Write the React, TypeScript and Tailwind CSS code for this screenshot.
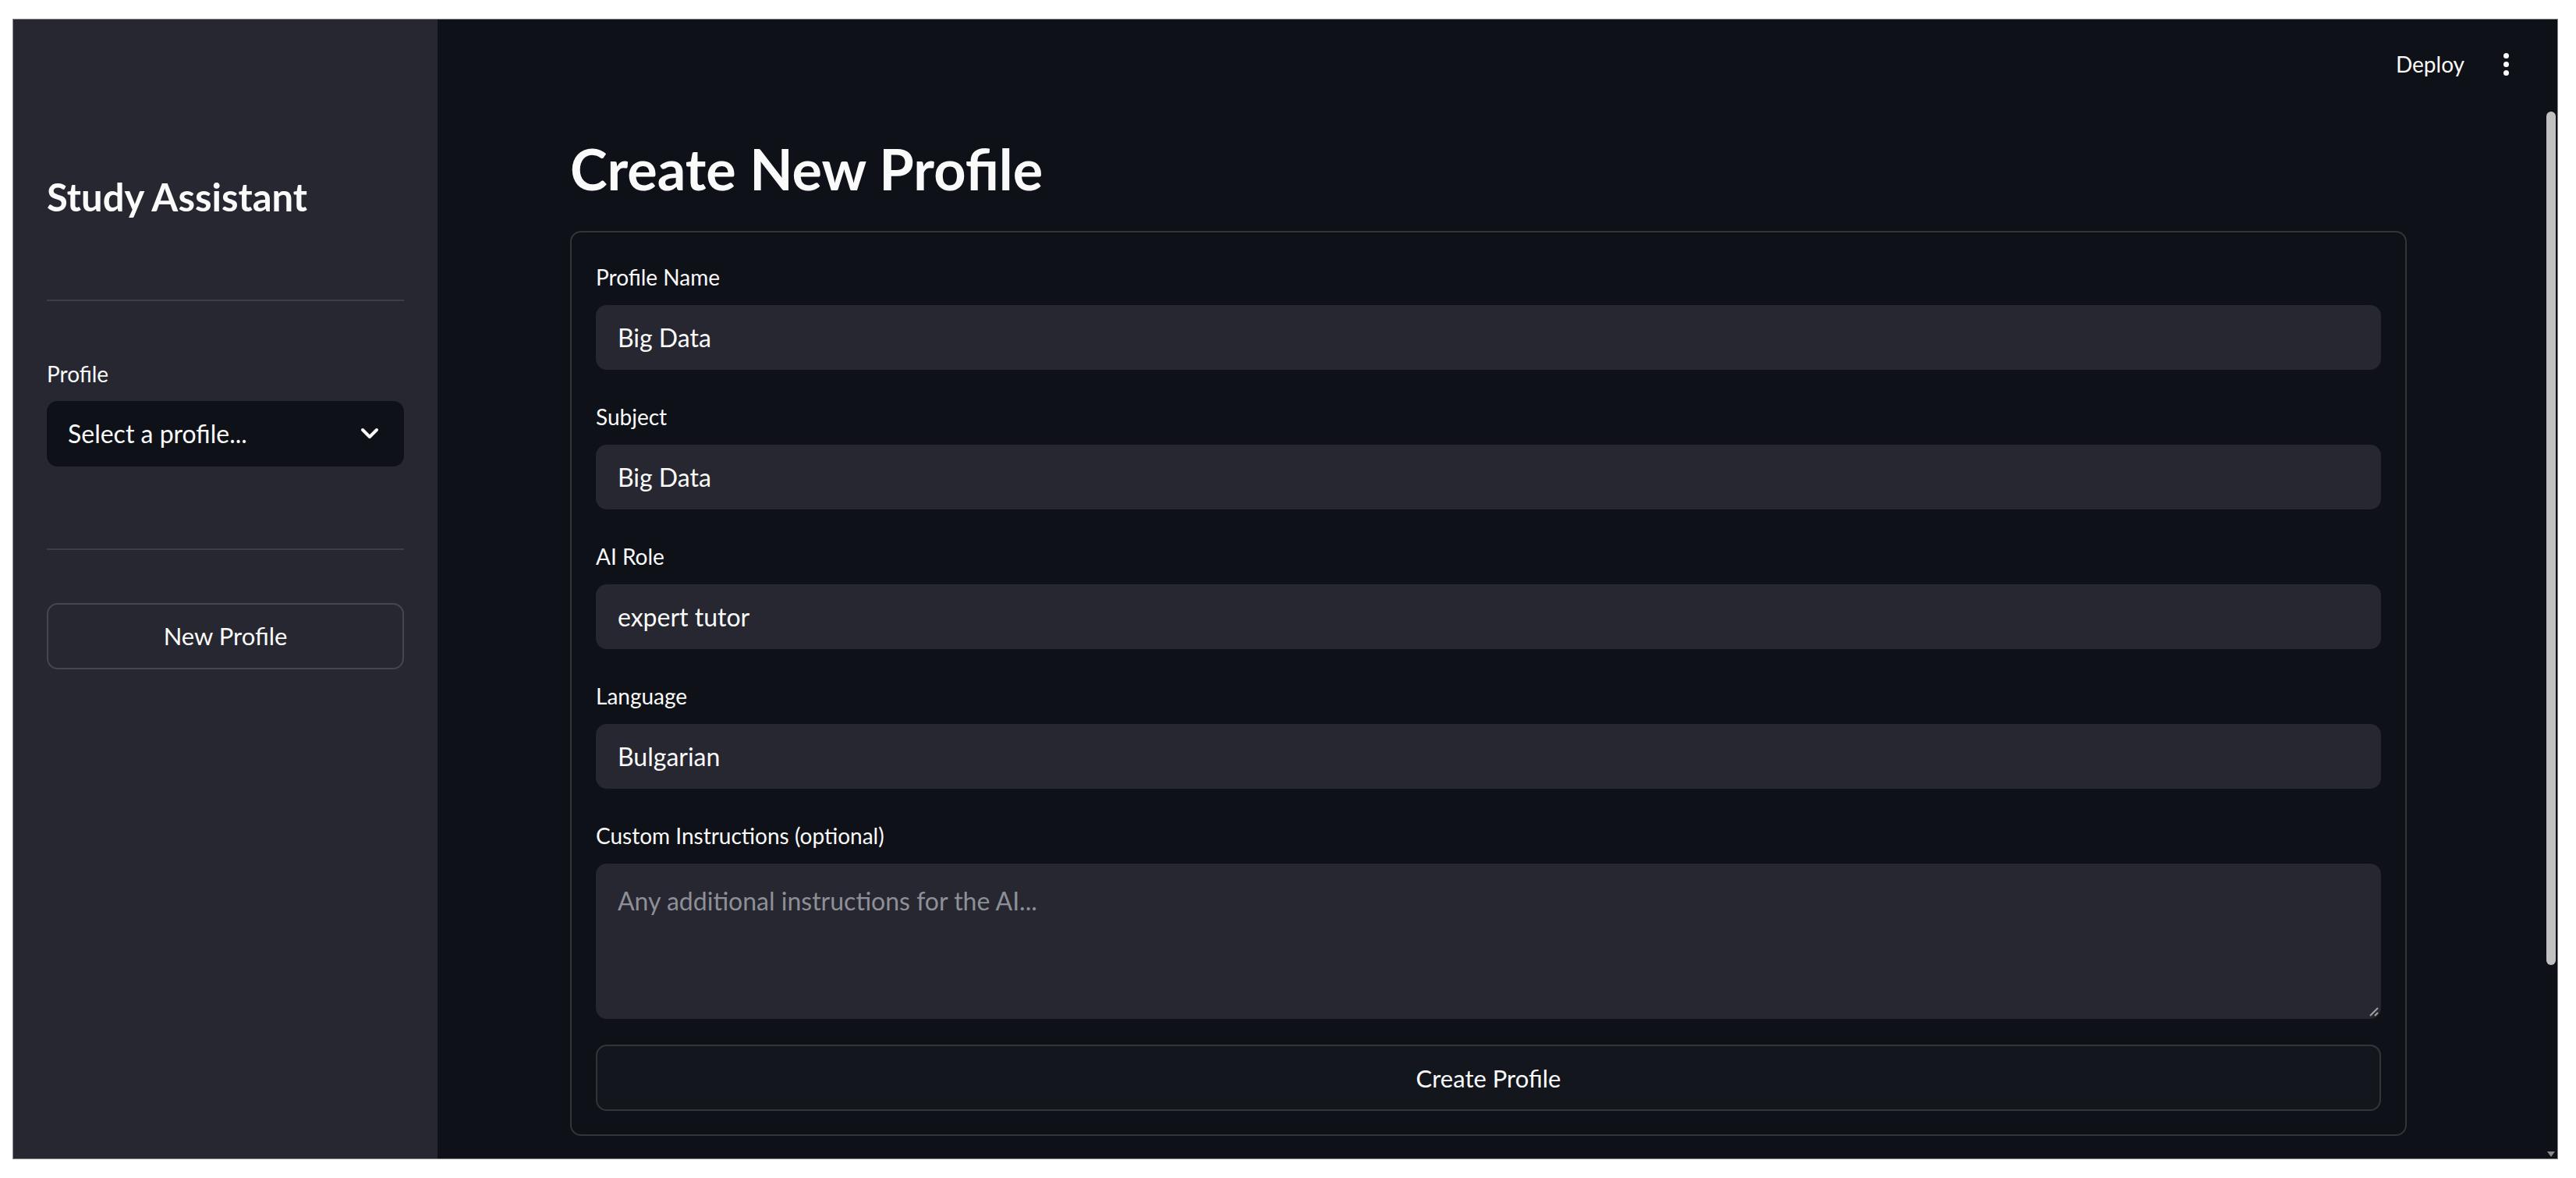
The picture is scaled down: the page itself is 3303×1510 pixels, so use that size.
import React from "react";

const font = { fontFamily: "Lato, 'Noto Sans', sans-serif" };

function Field({ label, value }: { label: string; value: string }) {
  return (
    <div className="flex flex-col">
      <div className="text-[28px] leading-[42px] mb-[15px] text-[#fafafa]">{label}</div>
      <div className="h-[83px] rounded-[14px] bg-[#262730] flex items-center pl-[28px] text-[32px] text-[#fafafa]">
        {value}
      </div>
    </div>
  );
}

export default function App() {
  return (
    <div className="w-[3303px] h-[1510px] bg-white pl-[16px] pt-[24px]" style={font}>
      <div className="w-[3264px] h-[1462px] border border-[#8a8a8a] flex overflow-hidden">
        {/* Sidebar */}
        <aside className="w-[544px] shrink-0 bg-[#262730] px-[43px] pt-[198px] flex flex-col">
          <div className="text-[49px] leading-[1.2] font-bold text-[#fafafa]">Study Assistant</div>
          <div className="mt-[102px] h-[2px] bg-[#3d3e46]" />
          <div className="mt-[72px] text-[28px] leading-[42px] text-[#fafafa]">Profile</div>
          <div className="mt-[14px] h-[84px] rounded-[14px] bg-[#0e1117] flex items-center justify-between pl-[27px] pr-[32px]">
            <span className="text-[32px] text-[#fafafa]">Select a profile...</span>
            <svg width="24" height="16" viewBox="0 0 24 16" fill="none">
              <path d="M3 3 L12 12 L21 3" stroke="#fafafa" strokeWidth="4" strokeLinecap="round" strokeLinejoin="round" />
            </svg>
          </div>
          <div className="mt-[105px] h-[2px] bg-[#3d3e46]" />
          <button className="mt-[68px] h-[85px] rounded-[14px] border-2 border-[#45464e] bg-[#262730] text-[31px] text-[#fafafa] flex items-center justify-center">
            New Profile
          </button>
        </aside>

        {/* Main */}
        <main className="flex-1 bg-[#0e1117] flex">
          <div className="flex-1 flex flex-col">
            <header className="h-[114px] flex items-center justify-end pr-[44px] gap-[48px]">
              <span className="text-[28px] text-[#fafafa]">Deploy</span>
              <div className="flex flex-col items-center gap-[4px] w-[10px]">
                <span className="w-[7px] h-[7px] rounded-full bg-[#fafafa]" />
                <span className="w-[7px] h-[7px] rounded-full bg-[#fafafa]" />
                <span className="w-[7px] h-[7px] rounded-full bg-[#fafafa]" />
              </div>
            </header>
            <div className="pl-[170px] pr-[176px] pt-[34px]">
              <h1 className="text-[72px] leading-[1.2] font-bold text-[#fafafa]">Create New Profile</h1>
              <div className="mt-[37px] border-2 border-[#33353b] rounded-[14px] px-[31px] pt-[36px] pb-[30px] flex flex-col">
                <div className="flex flex-col gap-[39px]">
                  <Field label="Profile Name" value="Big Data" />
                  <Field label="Subject" value="Big Data" />
                  <Field label="AI Role" value="expert tutor" />
                  <Field label="Language" value="Bulgarian" />
                  <div className="flex flex-col">
                    <div className="text-[28px] leading-[42px] mb-[15px] text-[#fafafa]">Custom Instructions (optional)</div>
                    <div className="relative h-[199px] rounded-[14px] bg-[#262730] pl-[28px] pt-[26px] text-[32px] leading-[1.4] text-[#8e9097]">
                      Any additional instructions for the AI...
                      <svg className="absolute right-[2px] bottom-[2px]" width="16" height="16" viewBox="0 0 16 16">
                        <path d="M14 4 L4 14 M14 10 L10 14" stroke="#a0a0a0" strokeWidth="2" />
                      </svg>
                    </div>
                  </div>
                </div>
                <button className="mt-[33px] h-[85px] rounded-[14px] border-2 border-[#33353b] bg-[#13161d] text-[31px] text-[#fafafa] flex items-center justify-center">
                  Create Profile
                </button>
              </div>
            </div>
          </div>
          {/* Scrollbar */}
          <div className="w-[17px] shrink-0 flex flex-col items-center pt-[118px] pb-[2px]">
            <div className="w-[12px] h-[1094px] rounded-full bg-[#c1c1c1]" />
            <div className="flex-1" />
            <svg width="12" height="7" viewBox="0 0 12 7">
              <path d="M1 0 L11 0 L6 7 Z" fill="#8a8a8a" />
            </svg>
          </div>
        </main>
      </div>
    </div>
  );
}
